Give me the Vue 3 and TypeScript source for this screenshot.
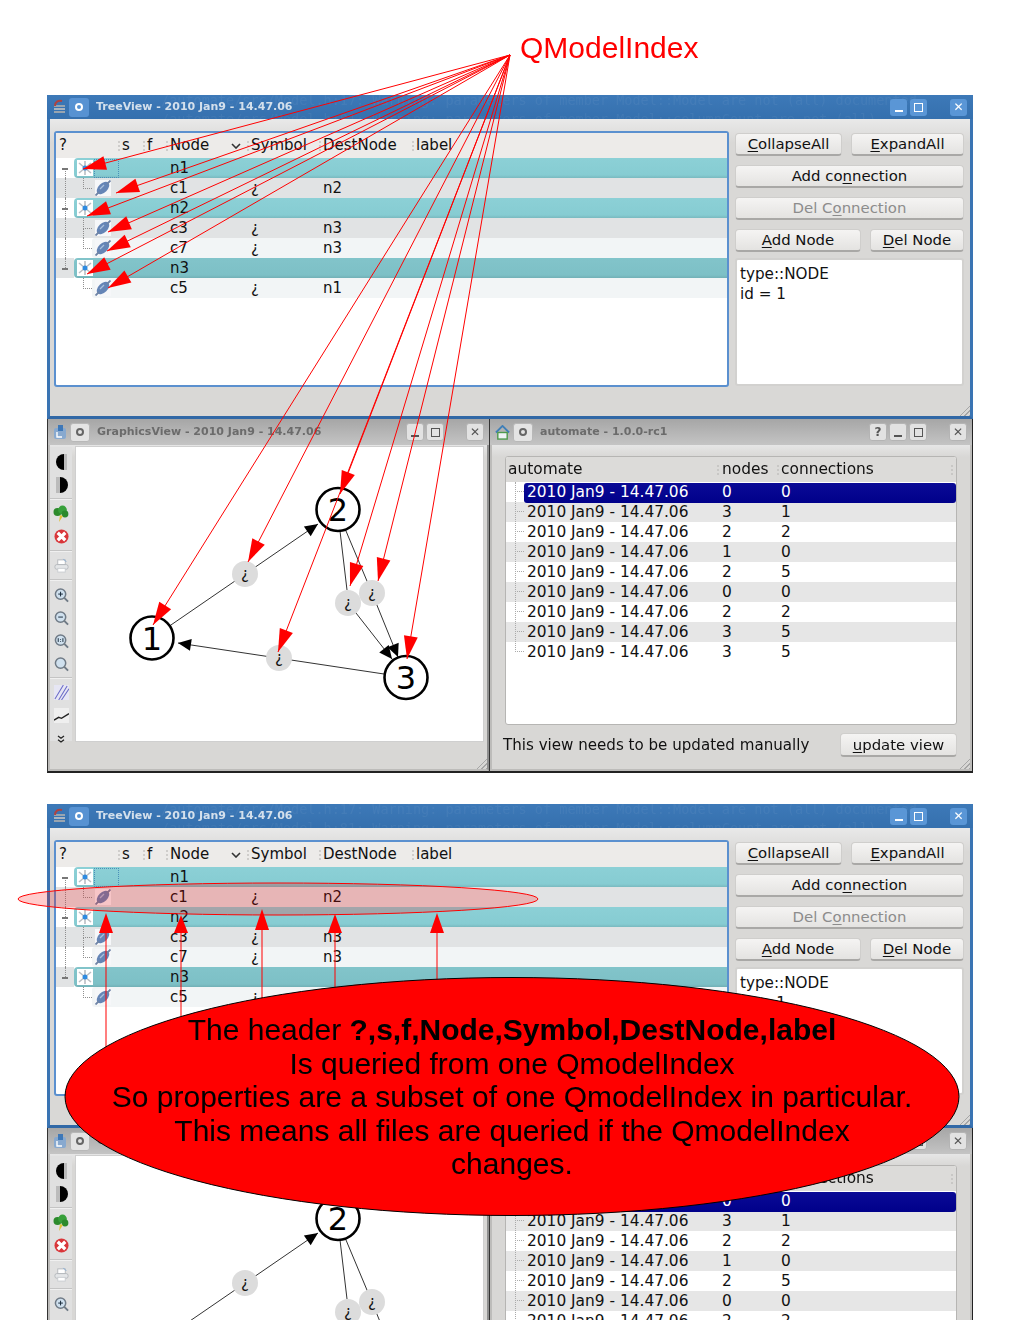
<script setup lang="ts">
type Pt = [number, number]

const head = (from: Pt, to: Pt, len: number, hw: number): string => {
  const dx = to[0] - from[0]
  const dy = to[1] - from[1]
  const d = Math.hypot(dx, dy)
  const ux = dx / d
  const uy = dy / d
  const bx = to[0] - ux * len
  const by = to[1] - uy * len
  return `${to[0]},${to[1]} ${bx - uy * hw},${by + ux * hw} ${bx + uy * hw},${by - ux * hw}`
}

const origin: Pt = [510, 55]
const tips: Pt[] = [
  [83, 169], [116, 193], [87, 216], [108, 232], [107, 251], [87, 274], [108, 288],
  [153, 625], [248, 562], [340, 494], [278, 652], [350, 586], [378, 581], [407, 659],
]
const pointers = tips.map((t) => ({ x: t[0], y: t[1], head: head(origin, t, 23, 7) }))

const upArrows = [
  { x: 106, tip: 913, base: 933, end: 1060 },
  { x: 181, tip: 915, base: 933, end: 1030 },
  { x: 262, tip: 909, base: 930, end: 1010 },
  { x: 335, tip: 914, base: 933, end: 995 },
  { x: 437, tip: 913, base: 933, end: 985 },
]

interface TreeRow {
  kind: 'n' | 'c'
  name: string
  sym?: string
  dest?: string
  bg: string
  gutter?: string
  trunk?: string
  more?: boolean
  focus?: boolean
}

const treeRows: TreeRow[] = [
  { kind: 'n', name: 'n1', bg: 'teal', trunk: 't-lower', focus: true },
  { kind: 'c', name: 'c1', sym: '¿', dest: 'n2', bg: 'gray', gutter: 'gray', trunk: 't-full' },
  { kind: 'n', name: 'n2', bg: 'teal', trunk: 't-full' },
  { kind: 'c', name: 'c3', sym: '¿', dest: 'n3', bg: 'gray', gutter: 'gray', trunk: 't-full', more: true },
  { kind: 'c', name: 'c7', sym: '¿', dest: 'n3', bg: 'pale', trunk: 't-full' },
  { kind: 'n', name: 'n3', bg: 'teal2', gutter: 'gray', trunk: 't-upper' },
  { kind: 'c', name: 'c5', sym: '¿', dest: 'n1', bg: 'pale' },
]

const treeHeads = [
  { t: '?', w: 62, p: 3 },
  { t: 's', w: 25, p: 4 },
  { t: 'f', w: 23, p: 4 },
  { t: 'Node', w: 81, p: 4 },
  { t: 'Symbol', w: 72, p: 4 },
  { t: 'DestNode', w: 93, p: 4 },
  { t: 'label', w: 120, p: 4 },
]

const sessions = [
  [0, 0], [3, 1], [2, 2], [1, 0], [2, 5], [0, 0], [2, 2], [3, 5], [3, 5],
]

const smalls: Pt[] = [[245, 574], [348, 603], [372, 593], [279, 658]]
const nodes = [
  { n: 1, x: 152, y: 638 },
  { n: 2, x: 338, y: 509.5 },
  { n: 3, x: 406, y: 677.5 },
]
const edges: Array<[number, number, number, number]> = [
  [168, 627, 318, 524],
  [384, 674, 178, 643],
  [340, 531, 347, 590],
  [356, 613, 392, 659],
  [346, 531, 372, 593],
  [372, 593, 398, 657],
]
const blackHeads = [
  head([245, 574], [318, 524], 13, 6),
  head([384, 674], [178, 643], 13, 6),
  head([356, 613], [392, 659], 13, 6),
  head([372, 593], [398, 657], 13, 6),
]
</script>

<template>
  <div class="page">
    <section v-for="s in 2" :key="s" class="screen">
      <div class="tree-win">
        <header class="title active">
          <div class="ghost">
            <span>/automate/src/Model.h:17: Warning: parameters of member Model::Model are not (all) documented</span>
            <span>/automate/src/Model.h:81: Warning: parameters of member Model::columnCount are not (all)</span>
          </div>
          <svg class="app-icon" viewBox="0 0 14 16" width="14" height="16">
            <rect x="2" y="9" width="11" height="2" fill="#a8b4c0" />
            <rect x="2" y="12" width="11" height="2" fill="#98a4b0" />
            <rect x="2" y="6" width="11" height="2" fill="#98a4b0" />
            <path d="M3 7 C3 3 6 1 10 2" fill="none" stroke="#b0433f" stroke-width="2" />
          </svg>
          <span class="pin blue"><i></i></span>
          <span class="title-text">TreeView - 2010 Jan9 - 14.47.06</span>
          <span class="spacer"></span>
          <span class="wbtn blue"><b class="g-min"></b></span>
          <span class="wbtn blue"><b class="g-max"></b></span>
          <span class="wbtn blue close">✕</span>
        </header>
        <div class="tree-body">
          <div class="tree-widget">
            <div class="tree-head">
              <span
                v-for="(h, i) in treeHeads"
                :key="h.t"
                class="th"
                :class="{ sep: i > 0 }"
                :style="{ width: h.w + 'px', paddingLeft: h.p + 'px' }"
              >{{ h.t }}<svg v-if="h.t === 'Node'" class="chev" viewBox="0 0 10 6" width="10" height="6"><path d="M1 1 L5 5 L9 1" fill="none" stroke="#333" stroke-width="1.6" /></svg></span>
            </div>
            <div
              v-for="r in treeRows"
              :key="r.name"
              class="row"
              :class="'row-' + r.kind"
            >
              <div class="gutter" :class="r.gutter">
                <i v-if="r.trunk" class="trunk" :class="r.trunk"></i>
                <i v-if="r.kind === 'n'" class="dash"></i>
                <i v-if="r.kind === 'c'" class="elbow"></i>
                <i v-if="r.more" class="elbow-more"></i>
              </div>
              <div class="cells" :class="r.bg">
                <div class="ico-cell">
                  <svg v-if="r.kind === 'n'" class="ico" viewBox="0 0 16 16" width="16" height="16">
                    <rect width="16" height="16" fill="#fff" />
                    <path d="M8 1 V15 M2 3 L14 13 M14 3 L2 13" stroke="#b9bec4" stroke-width="1.6" />
                    <circle cx="8" cy="8" r="2.5" fill="#2f8be0" />
                  </svg>
                  <svg v-else class="ico" viewBox="0 0 16 16" width="16" height="16">
                    <rect width="16" height="16" fill="#f6f7f9" />
                    <ellipse cx="8" cy="8" rx="7.5" ry="4.6" transform="rotate(-45 8 8)" fill="#6585b6" />
                    <path d="M5 9 L9 5" stroke="#a9bfdc" stroke-width="1.2" />
                    <path d="M0.5 15.5 L4 12 M12 4 L15.5 0.5" stroke="#6f84a6" stroke-width="1.8" />
                  </svg>
                  <i v-if="r.focus" class="focus"></i>
                </div>
                <span>{{ r.name }}</span>
                <span>{{ r.sym }}</span>
                <span>{{ r.dest }}</span>
              </div>
            </div>
          </div>
          <aside class="tree-side">
            <div class="btn-row">
              <button class="btn w-collapse"><u>C</u>ollapseAll</button>
              <button class="btn w-expand"><u>E</u>xpandAll</button>
            </div>
            <button class="btn">Add co<u>n</u>nection</button>
            <button class="btn off">Del C<u>o</u>nnection</button>
            <div class="btn-row">
              <button class="btn w-addn"><u>A</u>dd Node</button>
              <button class="btn w-deln"><u>D</u>el Node</button>
            </div>
            <div class="info">
              <div>type::NODE</div>
              <div>id = 1</div>
            </div>
          </aside>
          <i class="grip"></i>
        </div>
      </div>

      <div class="lower">
        <div class="low-win graph-win">
          <header class="title idle">
            <svg class="app-icon" viewBox="0 0 14 16" width="14" height="16">
              <rect x="1" y="4" width="12" height="11" rx="2" fill="#88a9cf" />
              <rect x="5" y="1" width="5" height="6" fill="#3e78b8" />
              <path d="M4 8 V13 H9" fill="none" stroke="#fff" stroke-width="1.4" />
            </svg>
            <span class="pin gray"><i></i></span>
            <span class="title-text">GraphicsView - 2010 Jan9 - 14.47.06</span>
            <span class="spacer"></span>
            <span class="wbtn gray"><b class="g-min"></b></span>
            <span class="wbtn gray"><b class="g-max"></b></span>
            <span class="wbtn gray close">✕</span>
          </header>
          <div class="graph-body">
            <div class="tools">
              <span class="tool">
                <svg viewBox="0 0 16 18" width="16" height="18"><path d="M11 1 A8 8 0 0 0 11 17 Z" fill="#000" /><rect x="11" y="1" width="3" height="16" fill="#bbb" /></svg>
              </span>
              <span class="tool">
                <svg viewBox="0 0 16 18" width="16" height="18"><path d="M7 1 A8 8 0 0 1 7 17 Z" fill="#000" /><rect x="3" y="1" width="4" height="16" fill="#bbb" /></svg>
              </span>
              <i class="tool-sep"></i>
              <span class="tool">
                <svg viewBox="0 0 16 18" width="16" height="18"><circle cx="4.5" cy="7" r="4" fill="#2c8a2c" /><circle cx="9.5" cy="5" r="4.4" fill="#37a03a" /><circle cx="12" cy="9" r="3.4" fill="#2c8a2c" /><path d="M6 17 L7 10 L10 11 Z" fill="#e0c23a" /></svg>
              </span>
              <span class="tool">
                <svg viewBox="0 0 16 16" width="15" height="15"><circle cx="8" cy="8" r="7.5" fill="#d9363a" /><path d="M4 4 L12 12 M12 4 L4 12" stroke="#fff" stroke-width="3.4" /></svg>
              </span>
              <i class="tool-sep"></i>
              <span class="tool">
                <svg viewBox="0 0 16 16" width="15" height="15"><rect x="1" y="7" width="14" height="5" rx="2" fill="#e4e6e8" stroke="#b4b8bc" /><rect x="4" y="2" width="8" height="5" fill="#fff" stroke="#b4b8bc" /><rect x="4" y="11" width="8" height="4" fill="#fff" stroke="#c8ccd0" /><path d="M10 1 L13 4" stroke="#7fa8d4" /></svg>
              </span>
              <i class="tool-sep"></i>
              <span v-for="g in ['+', '-', '1:1', '']" :key="g" class="tool">
                <svg viewBox="0 0 16 16" width="15" height="16">
                  <circle cx="7" cy="7" r="5.5" fill="#cfe0ee" stroke="#6f7a86" stroke-width="1.6" />
                  <path d="M11 11 L15 15" stroke="#6f7a86" stroke-width="2" />
                  <path v-if="g === '+'" d="M4.5 7 H9.5 M7 4.5 V9.5" stroke="#123" stroke-width="1" />
                  <path v-if="g === '-'" d="M4.5 7 H9.5" stroke="#123" stroke-width="1" />
                  <path v-if="g === '1:1'" d="M4.5 5 V9 M9.5 5 V9 M7 6 V6.8 M7 8 V8.8" stroke="#123" stroke-width="1" />
                </svg>
              </span>
              <i class="tool-sep"></i>
              <span class="tool">
                <svg viewBox="0 0 16 16" width="15" height="15"><rect width="16" height="16" fill="#e6e6f4" /><path d="M1 15 L10 0 M5 16 L14 1 M8 16 L16 4" stroke="#6b6bc8" stroke-width="1.1" /></svg>
              </span>
              <span class="tool">
                <svg viewBox="0 0 16 16" width="15" height="15"><rect width="16" height="16" fill="#efefef" /><path d="M0 13 L5 10 L8 11 L16 6" fill="none" stroke="#222" stroke-width="1.5" /></svg>
              </span>
              <span class="tool">
                <svg viewBox="0 0 8 8" width="8" height="8"><path d="M1 1 L4 3.2 L7 1 M1 4.8 L4 7 L7 4.8" fill="none" stroke="#222" stroke-width="1.3" /></svg>
              </span>
            </div>
            <svg class="canvas" viewBox="76 447 407 294" width="407" height="294">
              <rect x="76" y="447" width="407" height="294" fill="#fff" />
              <line v-for="(e, i) in edges" :key="i" :x1="e[0]" :y1="e[1]" :x2="e[2]" :y2="e[3]" stroke="#333" stroke-width="1" />
              <polygon v-for="(h, i) in blackHeads" :key="i" :points="h" fill="#000" />
              <g v-for="p in smalls" :key="p[0]">
                <circle :cx="p[0]" :cy="p[1]" r="13" fill="#dcdcdc" />
                <text :x="p[0]" :y="p[1] + 5" class="q-mark">¿</text>
              </g>
              <g v-for="n in nodes" :key="n.n">
                <circle :cx="n.x" :cy="n.y" r="21.5" fill="#fff" stroke="#000" stroke-width="2.6" />
                <text :x="n.x" :y="n.y + 11.5" class="node-num">{{ n.n }}</text>
              </g>
            </svg>
            <i class="grip"></i>
          </div>
        </div>

        <div class="low-win auto-win">
          <header class="title idle">
            <svg class="app-icon" viewBox="0 0 16 16" width="15" height="15">
              <path d="M1 8 L8 1 L15 8" fill="none" stroke="#3f7fb8" stroke-width="2" />
              <rect x="3" y="8" width="10" height="7" fill="#eef2f6" stroke="#4e9a4e" stroke-width="1.5" />
            </svg>
            <span class="pin gray"><i></i></span>
            <span class="title-text">automate - 1.0.0-rc1</span>
            <span class="spacer"></span>
            <span class="wbtn gray help">?</span>
            <span class="wbtn gray"><b class="g-min"></b></span>
            <span class="wbtn gray"><b class="g-max"></b></span>
            <span class="wbtn gray close">✕</span>
          </header>
          <div class="auto-body">
            <div class="list">
              <div class="list-head">
                <span class="lh lh-a">automate</span>
                <span class="lh lh-b">nodes</span>
                <span class="lh lh-c">connections</span>
              </div>
              <div class="list-rows">
                <i class="list-guide"></i>
                <div
                  v-for="(r, i) in sessions"
                  :key="i"
                  class="lrow"
                  :class="{ alt: i % 2 === 1 }"
                >
                  <i class="lstub"></i>
                  <div class="lcells" :class="{ sel: i === 0 }">
                    <span class="lname">2010 Jan9 - 14.47.06</span>
                    <span class="lnum">{{ r[0] }}</span>
                    <span>{{ r[1] }}</span>
                  </div>
                </div>
              </div>
            </div>
            <div class="auto-foot">
              <span class="foot-text">This view needs to be updated manually</span>
              <button class="btn w-update"><u>u</u>pdate view</button>
            </div>
            <i class="grip"></i>
          </div>
        </div>
      </div>
    </section>

    <svg class="overlay" viewBox="0 0 1020 1320" width="1020" height="1320">
      <line
        v-for="p in pointers"
        :key="p.x + '-' + p.y"
        :x1="510" :y1="55" :x2="p.x" :y2="p.y"
        stroke="#f00" stroke-width="1"
      />
      <polygon v-for="p in pointers" :key="'h' + p.x + p.y" :points="p.head" fill="#f00" />
      <ellipse cx="278" cy="899" rx="260" ry="16" fill="rgba(255,0,0,.2)" stroke="#f00" stroke-width="1" />
      <line
        v-for="a in upArrows"
        :key="'u' + a.x"
        :x1="a.x" :y1="a.base" :x2="a.x" :y2="a.end"
        stroke="rgba(255,0,0,.5)" stroke-width="2"
      />
      <polygon
        v-for="a in upArrows"
        :key="'t' + a.x"
        :points="`${a.x},${a.tip} ${a.x - 7},${a.base} ${a.x + 7},${a.base}`"
        fill="#f00"
      />
      <ellipse cx="512" cy="1096.5" rx="447" ry="119" fill="#f00" stroke="#000" stroke-width="1" />
    </svg>
    <div class="qindex">QModelIndex</div>
    <div class="callout">
      <div>The header <b>?,s,f,Node,Symbol,DestNode,label</b></div>
      <div>Is queried from one QmodelIndex</div>
      <div>So properties are a subset of one QmodelIndex in particular.</div>
      <div>This means all files are queried if the QmodelIndex</div>
      <div>changes.</div>
    </div>
  </div>
</template>

<style>
html, body { margin: 0; background: #fff; }
</style>

<style scoped>
* { box-sizing: border-box; }
.page {
  position: relative;
  width: 1020px;
  height: 1320px;
  overflow: hidden;
  background: #fff;
  padding: 95px 0 0 47px;
  font-family: "DejaVu Sans", sans-serif;
  color: #111;
}
.screen {
  width: 926px;
  height: 678px;
  margin-bottom: 31px;
  filter: blur(0.45px);
}
.title {
  position: relative;
  display: flex;
  align-items: center;
  overflow: hidden;
}
.title.active {
  height: 24px;
  background: linear-gradient(#3d79b8, #3570ae);
  padding: 0 6px 0 5px;
}
.title.idle {
  height: 26px;
  background: linear-gradient(#a6a6a6, #c4c4c4);
  padding: 0 5px;
}
.ghost {
  position: absolute;
  left: 114px;
  top: 0;
  display: flex;
  flex-direction: column;
  font: 13.5px/19px "DejaVu Sans Mono", monospace;
  color: rgba(255, 255, 255, 0.05);
  white-space: nowrap;
  margin-top: -4px;
}
.app-icon { position: relative; flex: none; margin-right: 3px; }
.pin {
  position: relative;
  flex: none;
  width: 20px;
  height: 19px;
  border-radius: 3px;
  display: flex;
  align-items: center;
  justify-content: center;
}
.pin i {
  width: 8px;
  height: 8px;
  border-radius: 50%;
  border: 2px solid #fff;
}
.pin.blue { background: #5792d2; }
.pin.gray { background: #e4e4e4; border: 1px solid #b8b8b8; }
.pin.gray i { border-color: #666; }
.title-text {
  position: relative;
  margin: 0 0 2px 7px;
  font-size: 11px;
  font-weight: 600;
  white-space: nowrap;
}
.active .title-text { color: #d4e0ec; }
.idle .title-text { color: #6b6b6b; font-weight: 700; }
.spacer { flex: 1; }
.wbtn {
  position: relative;
  flex: none;
  width: 17px;
  height: 17px;
  border-radius: 3px;
  margin-left: 3px;
  display: flex;
  align-items: center;
  justify-content: center;
  font-size: 12px;
  line-height: 1;
  font-weight: 700;
}
.wbtn.close { margin-left: 23px; }
.wbtn.blue { background: #5a96d6; color: #fff; }
.wbtn.gray {
  width: 18px;
  height: 18px;
  margin-left: 2px;
  background: #e2e2e2;
  color: #555;
  border: 1px solid #b4b4b4;
}
.wbtn.gray.close { margin-left: 22px; }
.g-min {
  width: 8px;
  height: 2px;
  background: currentColor;
  margin-top: 7px;
}
.g-max {
  width: 9px;
  height: 9px;
  border: 1.5px solid currentColor;
}

.tree-win { height: 324px; display: flex; flex-direction: column; }
.tree-body {
  position: relative;
  height: 300px;
  display: flex;
  gap: 6px;
  padding: 12px 6px 0 4px;
  background: linear-gradient(#e9e9e9, #d9d8d6 24px);
  border: 3px solid #3a74b3;
  border-top: 0;
  border-bottom-color: #3168a6;
}
.tree-widget {
  width: 675px;
  height: 256px;
  background: #fff;
  border: 2px solid #5b90cf;
  border-radius: 3px;
  font-size: 15px;
}
.tree-head {
  display: flex;
  height: 25px;
  align-items: center;
  padding-bottom: 1px;
  background: #edebe9;
  overflow: hidden;
  white-space: nowrap;
}
.th { position: relative; flex: none; }
.th.sep::before {
  content: "";
  position: absolute;
  left: 0;
  top: 5px;
  height: 10px;
  border-left: 2px dotted #cfcdcb;
}
.chev { position: absolute; right: 6px; top: 7px; }
.row { position: relative; display: flex; height: 20px; line-height: 20px; }
.gutter { position: relative; flex: none; height: 20px; }
.gutter.gray { background: #e1e3e4; }
.row-n .gutter { width: 18px; }
.row-c .gutter { width: 36px; }
.trunk {
  position: absolute;
  left: 9px;
  border-left: 1px dotted #8f8f8f;
}
.t-full { top: 0; bottom: 0; }
.t-lower { top: 10px; bottom: 0; }
.t-upper { top: 0; bottom: 10px; }
.dash {
  position: absolute;
  left: 6px;
  top: 10px;
  width: 6px;
  height: 2px;
  background: #777;
}
.elbow {
  position: absolute;
  left: 27px;
  top: 0;
  width: 9px;
  height: 11px;
  border-left: 1px dotted #8f8f8f;
  border-bottom: 1px dotted #8f8f8f;
}
.elbow-more {
  position: absolute;
  left: 27px;
  top: 10px;
  bottom: 0;
  border-left: 1px dotted #8f8f8f;
}
.cells { flex: 1; display: grid; height: 20px; }
.row-n .cells { grid-template-columns: 96px 81px 72px 1fr; }
.row-c .cells { grid-template-columns: 78px 81px 72px 1fr; }
.cells.teal {
  background: linear-gradient(#8cd0d6, #86ccd2 85%, #79b9bf);
  border-radius: 4px 0 0 4px;
}
.cells.teal2 {
  background: linear-gradient(#82c4ca, #7dc0c6 85%, #72b0b6);
  border-radius: 4px 0 0 4px;
}
.cells.gray { background: #e1e3e4; }
.cells.pale { background: #f2f5f6; border-radius: 3px 0 0 3px; }
.ico-cell { position: relative; padding: 2px 0 0 3px; height: 20px; }
.ico { display: block; }
.focus {
  position: absolute;
  left: 20px;
  top: 1px;
  width: 25px;
  height: 19px;
  border: 1px dotted #4a8fb8;
}
.tree-side {
  width: 229px;
  display: flex;
  flex-direction: column;
  gap: 9px;
  padding-top: 2px;
}
.btn-row { display: flex; gap: 9px; }
.btn {
  height: 23px;
  flex: none;
  padding: 0;
  font: 14.9px/20px "DejaVu Sans", sans-serif;
  color: #111;
  background: linear-gradient(#f5f4f3, #e4e3e1);
  border: 1px solid #cfcecc;
  border-bottom: 2px solid #a9a8a6;
  border-radius: 4px;
}
.btn u { text-underline-offset: 2px; }
.btn.off { color: #8c8c8c; }
.w-collapse { width: 107px; }
.w-expand { width: 113px; }
.w-addn { width: 126px; }
.w-deln { width: 94px; }
.w-update { width: 117px; height: 24px; }
.info {
  height: 128px;
  margin-top: -3px;
  background: #fff;
  border: 2px solid #d2d1cf;
  border-radius: 3px;
  padding: 4px 3px;
  font-size: 15.2px;
  line-height: 20px;
}
.grip {
  position: absolute;
  right: 0;
  bottom: 0;
  width: 13px;
  height: 13px;
  background: repeating-linear-gradient(135deg, transparent 0 2px, #a6a6a6 2px 3px);
  clip-path: polygon(100% 0, 100% 100%, 0 100%);
}

.lower { display: flex; height: 354px; }
.low-win {
  display: flex;
  flex-direction: column;
  height: 354px;
  border-bottom: 2px solid #222;
  background: #d8d7d5;
}
.graph-win { width: 442px; border-left: 1px solid #333; }
.auto-win { width: 484px; border-left: 1px solid #333; border-right: 1px solid #222; }
.graph-body {
  position: relative;
  flex: 1;
  display: flex;
  align-items: flex-start;
  gap: 4px;
  padding: 2px 4px 0 0;
  border: 2px solid #bdbcba;
  border-top: 0;
  border-right-color: #8f8f8f;
  background: linear-gradient(#e6e6e6, #d8d7d5 12px);
}
.tools {
  flex: none;
  width: 22px;
  height: 294px;
  display: flex;
  flex-direction: column;
  padding-top: 3px;
  background: #e0e0e0;
}
.tool {
  flex: none;
  height: 23px;
  display: flex;
  align-items: center;
  justify-content: center;
}
.tool-sep {
  flex: none;
  height: 6px;
  background: linear-gradient(#0000 2px, #c4c4c4 2px 3px, #f0f0f0 3px 4px, #0000 4px);
}
.canvas { display: block; flex: none; box-shadow: 0 0 0 1px #cfcfcf; }
.q-mark {
  font: 15px "DejaVu Sans", sans-serif;
  text-anchor: middle;
  fill: #111;
}
.node-num {
  font: 32px "DejaVu Sans", sans-serif;
  text-anchor: middle;
  fill: #000;
}
.auto-body {
  position: relative;
  flex: 1;
  display: flex;
  flex-direction: column;
  padding: 11px 12px 0 13px;
  border: 2px solid #bdbcba;
  border-top: 0;
  background: linear-gradient(#e6e6e6, #d8d7d5 12px);
  font-size: 15.4px;
}
.list {
  width: 452px;
  height: 269px;
  flex: none;
  border: 1px solid #b6b5b3;
  border-radius: 3px;
  background: #fff;
  overflow: hidden;
}
.list-head {
  display: flex;
  height: 25px;
  align-items: center;
  padding-bottom: 1px;
  background: #dcdbd9;
  white-space: nowrap;
}
.lh { position: relative; flex: none; padding-left: 4px; }
.lh-a { width: 211px; padding-left: 2px; }
.lh-b { width: 60px; padding-left: 5px; }
.lh-c { width: 170px; }
.lh-b::before, .lh-c::before, .lh-c::after {
  content: "";
  position: absolute;
  left: 0;
  top: 5px;
  height: 10px;
  border-left: 2px dotted #c8c7c5;
}
.lh-c::after { left: 174px; }
.list-rows { position: relative; }
.list-guide {
  position: absolute;
  left: 9px;
  top: 0;
  height: 170px;
  border-left: 1px dotted #aaa;
}
.lrow { display: flex; height: 20px; line-height: 20px; background: #fff; }
.lrow.alt { background: #e6e6e6; }
.lstub {
  flex: none;
  width: 18px;
  height: 10px;
  border-bottom: 1px dotted #aaa;
  clip-path: inset(0 0 0 9px);
}
.lcells {
  flex: 1;
  display: grid;
  grid-template-columns: 195px 59px 1fr;
  padding-left: 3px;
}
.lcells.sel {
  background: linear-gradient(#0a0a96, #00008a);
  color: #fff;
  border-radius: 3px;
  height: 20px;
  margin-top: 1px;
}
.lcells.sel span { margin-top: -1px; }
.auto-foot {
  display: flex;
  align-items: center;
  justify-content: space-between;
  width: 454px;
  margin: 8px 0 0 -2px;
  height: 24px;
  white-space: nowrap;
}
.foot-text { font-size: 15.1px; }

.overlay { position: absolute; left: 0; top: 0; display: block; }
.qindex {
  position: absolute;
  left: 520px;
  top: 30px;
  font: 30px/36px "Liberation Sans", Arial, sans-serif;
  color: #f00;
  white-space: nowrap;
}
.callout {
  position: absolute;
  left: 65px;
  top: 1013px;
  width: 894px;
  text-align: center;
  font: 30px/33.5px "Liberation Sans", Arial, sans-serif;
  color: #000;
  white-space: nowrap;
}
</style>
